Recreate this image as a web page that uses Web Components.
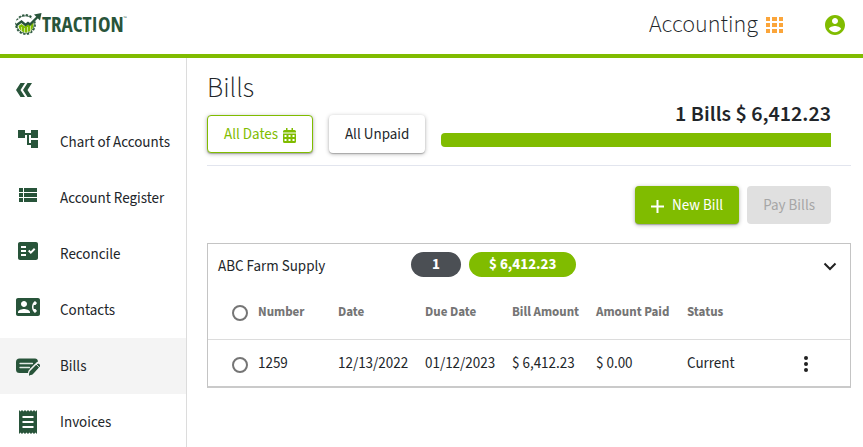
<!DOCTYPE html>
<html lang="en">
<head>
<meta charset="utf-8">
<title>Traction – Bills</title>
<style>
  html, body { height: 100%; }
  body {
    margin: 0;
    --brand: #80bc00;
    --forest: #28543a;
    --ink: #212529;
    --line: #dcdcdc;
    font: 15px/20px "Source Sans 3", "Noto Sans CJK SC", sans-serif;
    color: var(--ink);
    background: #fff;
  }
</style>
</head>
<body>
<app-shell>
  <app-header slot="header" section="Accounting"></app-header>
  <side-nav slot="nav">
    <nav-item icon="tree">Chart of Accounts</nav-item>
    <nav-item icon="list">Account Register</nav-item>
    <nav-item icon="check">Reconcile</nav-item>
    <nav-item icon="contact">Contacts</nav-item>
    <nav-item icon="bill" centered current>Bills</nav-item>
    <nav-item icon="receipt" centered>Invoices</nav-item>
  </side-nav>
  <bills-page>
    <vendor-card>
      <span slot="name">ABC Farm Supply</span>
      <pill-badge slot="badges" tone="dark">1</pill-badge>
      <pill-badge slot="badges">$ 6,412.23</pill-badge>
    </vendor-card>
  </bills-page>
</app-shell>
<script>
const icons = {
  tree: '<path d="M22 11V3h-7v3H9V3H2v8h7V8h2v10h4v3h7v-8h-7v3h-2V8h2v3z"/>',
  list: '<path d="M3 14h4v-4H3zm0 5h4v-4H3zM3 9h4V5H3zm5 5h13v-4H8zm0 5h13v-4H8zM8 5v4h13V5z"/>',
  check: '<path fill-rule="evenodd" d="M20 3H4c-1.100 0-2 .9-2 2v14c0 1.100.9 2 2 2h16c1.100 0 2-.9 2-2V5c0-1.100-.9-2-2-2zM10 17H5v-2h5zm0-4H5v-2h5zm0-4H5V7h5zm4.820 6L12 12.160l1.410-1.410 1.410 1.420L17.990 9l1.420 1.420z"/>',
  contact: '<path d="M22 3H2C.9 3 0 3.900 0 5v14c0 1.100.9 2 2 2h20c1.100 0 1.990-.9 1.990-2L24 5c0-1.100-.9-2-2-2zM8 6c1.660 0 3 1.340 3 3s-1.340 3-3 3-3-1.340-3-3 1.340-3 3-3zm6 12H2v-1c0-2 4-3.100 6-3.100s6 1.100 6 3.100zm3.850-4h1.640L21 16l-1.990 1.990c-1.310-.98-2.280-2.380-2.730-3.990-.18-.64-.28-1.310-.28-2s.1-1.360.28-2c.45-1.620 1.420-3.010 2.730-3.990L21 8l-1.510 2h-1.640c-.22.63-.35 1.300-.35 2s.13 1.370.35 2z"/>',
  bill: '<path d="M3.500 4.500h15.500q2.600 0 3 3l-1.200.8-6.800 6.700-1.200 4H3.500Q0 19 0 15.500V8q0-3.500 3.500-3.500z"/><path d="M4 9.500h12.500M4 13.500h9.500" stroke="#e4ebe6" stroke-width="1.300" stroke-linecap="round"/><path d="M20.200 11l2.600 2.600-6.200 6.700-3.600 1.200.8-3.900zM21 10.300q1.300-1 2.400.1t.1 2.500z" stroke="#f4f4f4" stroke-width="3" paint-order="stroke" stroke-linejoin="round"/><path d="M20.200 11l2.600 2.600-6.200 6.700-3.600 1.200.8-3.900zM21 10.300q1.300-1 2.400.1t.1 2.500z"/>',
  receipt: '<path fill-rule="evenodd" d="M17.500 18h-11v-2h11zm0-5h-11v-2h11zm0-5h-11V6h11zM3 24l1.500-1.500L6 24l1.500-1.500L9 24l1.500-1.500L12 24l1.500-1.500L15 24l1.500-1.500L18 24l1.500-1.500L21 24V0l-1.500 1.500L18 0l-1.500 1.500L15 0l-1.500 1.500L12 0l-1.500 1.500L9 0 7.500 1.500 6 0 4.500 1.500 3 0z"/>'
};

class ShadowElement extends HTMLElement {
  connectedCallback() {
    if (!this.shadowRoot) this.attachShadow({ mode: 'open' }).innerHTML = this.markup();
  }
}

customElements.define('app-shell', class extends ShadowElement {
  markup() { return `
    <style>
      :host { display: flex; flex-direction: column; height: 100%; overflow: hidden; }
      .body { display: flex; flex: 1; min-height: 0; }
      main { flex: 1; min-width: 0; }
      ::slotted([slot=nav]) { flex: none; }
    </style>
    <slot name="header"></slot>
    <div class="body"><slot name="nav"></slot><main><slot></slot></main></div>`; }
});

customElements.define('app-header', class extends ShadowElement {
  markup() { return `
    <style>
      :host { display: flex; align-items: center; height: 54px; padding: 0 16px; border-bottom: 4px solid var(--brand); }
      .logo { display: flex; align-items: center; color: var(--forest); text-decoration: none; margin-bottom: 6px; }
      .logo span { font: bold 21px/24px "Open Sans Condensed", "Roboto Condensed", sans-serif; }
      .logo sup { font-size: 5px; line-height: 5px; align-self: flex-start; margin-top: 4px; }
      .section { margin: 0 0 4px auto; font-size: 24px; font-weight: 300; line-height: 32px; }
      button { display: flex; border: 0; padding: 0; background: none; margin-bottom: 4px; cursor: pointer; }
      .apps { margin-left: 5px; }
      .user { margin-left: 38px; }
      svg { display: block; margin-left: -1px; }
    </style>
    <a class="logo" href="#" aria-label="Traction">
      <svg width="27" height="24" viewBox="0 0 27 24">
        <circle cx="10.500" cy="12.500" r="9.600" fill="none" stroke="#28543a" stroke-width="1.600" stroke-dasharray="2.300 1.470"/>
        <circle cx="10.500" cy="12.500" r="8.700" fill="none" stroke="#28543a" stroke-width=".9"/>
        <path d="M3.500 14l3-2 3.500 2.500 2.500-2.500 2 1 3.500-4q1.500 7-2.500 9.800-5 3.200-9.500 0-2-1.800-2.500-4.800z" fill="#80bc00"/>
        <path d="M6.500 15v5M9.500 16v5M12.500 15v6M15.500 13v7" stroke="#d9edb3" stroke-width=".8"/>
        <path d="M1 11.500l5.500-4 4 3.500 2.500-2 2 1.500L23 3" fill="none" stroke="#fff" stroke-width="4"/>
        <path d="M1 13.500l5.500-4 4 3.500 2.500-2 2 1.500L23 4.500" fill="none" stroke="#28543a" stroke-width="2.400"/>
        <path d="M19 2.500L26.500 1 25 8.500z" fill="#28543a"/>
      </svg><span>TRACTION</span><sup>™</sup>
    </a>
    <span class="section">${this.getAttribute('section')}</span>
    <button class="apps" aria-label="Apps"><svg width="24" height="24" fill="#fba53a"><path d="M4 4h4v4H4zm6 0h5v4h-5zm7 0h4v4h-4zM4 10h4v4H4zm6 0h5v4h-5zm7 0h4v4h-4zM4 16h4v4H4zm6 0h5v4h-5zm7 0h4v4h-4z"/></svg></button>
    <button class="user" aria-label="Account"><svg width="24" height="24" fill="#80bc00"><path fill-rule="evenodd" d="M12 2C6.480 2 2 6.480 2 12s4.480 10 10 10 10-4.480 10-10S17.520 2 12 2zm0 3c1.660 0 3 1.340 3 3s-1.340 3-3 3-3-1.340-3-3 1.340-3 3-3zm0 14.200c-2.500 0-4.710-1.280-6-3.220.03-1.990 4-3.080 6-3.080 1.990 0 5.970 1.090 6 3.080-1.290 1.940-3.500 3.220-6 3.220z"/></svg></button>`; }
});

customElements.define('side-nav', class extends ShadowElement {
  markup() { return `
    <style>
      :host { display: block; width: 186px; border-right: 1px solid var(--line); }
      button { display: flex; align-items: center; height: 56px; padding: 8px 16px 0; border: 0; background: none; box-sizing: border-box; cursor: pointer; }
    </style>
    <nav aria-label="Accounting">
      <button aria-label="Collapse menu"><svg width="16" height="14" fill="#28543a"><path d="M4.500 0H9L4.500 7 9 14H4.500L0 7zM11.500 0H16l-4.500 7 4.500 7h-4.500L7 7z"/></svg></button>
      <slot></slot>
    </nav>`; }
});

customElements.define('nav-item', class extends ShadowElement {
  markup() { return `
    <style>
      :host { display: block; }
      :host([current]) { background: #f4f4f4; }
      a { display: flex; align-items: center; gap: 20px; height: 56px; padding: 2px 0 0 16px; box-sizing: border-box; color: inherit; text-decoration: none; white-space: nowrap; }
      svg { flex: none; margin-bottom: 8px; }
      :host([centered]) svg { margin-bottom: 2px; }
    </style>
    <a href="#"><svg width="24" height="24" fill="#28543a" aria-hidden="true">${icons[this.getAttribute('icon')]}</svg><slot></slot></a>`; }
});

customElements.define('action-button', class extends ShadowElement {
  markup() { return `
    <style>
      :host { display: block; }
      button {
        display: flex; align-items: center; gap: 5px; height: 38px; padding: 2px 16px 0; box-sizing: border-box;
        font: inherit; color: var(--ink); background: #fff; border: 0; border-radius: 4px; white-space: nowrap;
        box-shadow: 0 1px 4px rgba(0,0,0,.3), 0 1px 1px rgba(0,0,0,.2); cursor: pointer;
      }
      :host([tone=outline]) button { color: var(--brand); border: 1px solid var(--brand); }
      :host([tone=solid]) button { color: #fff; background: var(--brand); gap: 8px; }
      button:disabled { color: #a6a6a6; background: #e0e0e0; box-shadow: none; }
    </style>
    <button ${this.hasAttribute('disabled') ? 'disabled' : ''}><slot></slot></button>`; }
});

customElements.define('pill-badge', class extends ShadowElement {
  markup() { return `
    <style>
      :host { display: block; min-width: 10px; padding: 1px 20px 0; border-radius: 13px; background: var(--brand); color: #fff; font-weight: 700; line-height: 24px; text-align: center; white-space: nowrap; }
      :host([tone=dark]) { background: #4b4f54; }
    </style><slot></slot>`; }
});

customElements.define('bills-page', class extends ShadowElement {
  markup() { return `
    <style>
      :host { display: block; padding: 18px 12px 0 20px; }
      h1 { margin: 0; font-size: 28px; font-weight: 300; line-height: 24px; }
      .filters { display: flex; align-items: flex-end; gap: 16px; padding: 0 20px 12px 0; border-bottom: 1px solid #e2e5ee; }
      .total { flex: 1; min-width: 0; text-align: right; font-size: 22px; font-weight: 600; line-height: 28px; padding-bottom: 6px; }
      .bar { height: 14px; margin-top: 5px; border-radius: 4px 0 0 4px; background: var(--brand); }
      .actions { display: flex; justify-content: flex-end; gap: 8px; padding: 20px 20px 19px 0; }
    </style>
    <h1>Bills</h1>
    <div class="filters">
      <action-button tone="outline">All Dates <svg width="13" height="15" viewBox="0 0 13 15" fill="#80bc00"><path fill-rule="evenodd" d="M3 0h1.500v2H8.500V0H10v2h1.500Q13 2 13 3.500V4.500H0V3.500Q0 2 1.500 2H3zM0 5.500h13v8Q13 15 11.500 15h-10Q0 15 0 13.500zM1.500 7v2h2V7zm4 0v2h2V7zm4 0v2h2V7zm-8 4v2h2v-2zm4 0v2h2v-2zm4 0v2h2v-2z"/></svg></action-button>
      <action-button>All Unpaid</action-button>
      <div class="total">1 Bills $ 6,412.23<div class="bar"></div></div>
    </div>
    <div class="actions">
      <action-button tone="solid"><svg width="13" height="13" fill="none" stroke="#fff" stroke-width="2"><path d="M6.500 0v13M0 6.500h13"/></svg>New Bill</action-button>
      <action-button disabled>Pay Bills</action-button>
    </div>
    <slot></slot>`; }
});

customElements.define('vendor-card', class extends ShadowElement {
  markup() { return `
    <style>
      :host { display: block; border: 1px solid #c4c4c4; border-bottom: 2px solid #cacaca; }
      header { display: grid; grid-template-columns: 193px 1fr auto; align-items: center; height: 42px; padding: 0 8px 0 10px; }
      ::slotted([slot=name]) { padding-top: 3px; }
      .badges { display: flex; gap: 8px; margin-bottom: 2px; }
      button { display: block; border: 0; padding: 0; background: none; cursor: pointer; }
      header button { margin-top: 2px; }
      svg { display: block; }
      table { width: 100%; table-layout: fixed; border-collapse: collapse; }
      th, td { padding: 0; text-align: left; white-space: nowrap; box-sizing: border-box; }
      th { height: 53px; color: #757575; font-size: 13px; font-weight: 700; border-bottom: 1px solid var(--line); }
      td { height: 47px; padding-top: 3px; }
      input { appearance: none; display: block; width: 16px; height: 16px; margin: 2px 0 0 24px; border: 2px solid #757575; border-radius: 50%; box-sizing: border-box; }
      td button { margin-left: auto; margin-right: 32px; }
    </style>
    <header>
      <slot name="name"></slot>
      <div class="badges"><slot name="badges"></slot></div>
      <button aria-label="Collapse vendor"><svg width="24" height="24" fill="none" stroke="#212121" stroke-width="2"><path d="M6.500 9.500L12 15l5.500-5.500"/></svg></button>
    </header>
    <table>
      <colgroup><col style="width:50px"><col style="width:80px"><col style="width:87px"><col style="width:87px"><col style="width:84px"><col style="width:91px"><col style="width:80px"><col></colgroup>
      <thead><tr><th><input type="checkbox" aria-label="Select all bills"></th><th>Number</th><th>Date</th><th>Due Date</th><th>Bill Amount</th><th>Amount Paid</th><th>Status</th><th></th></tr></thead>
      <tbody><tr><td><input type="checkbox" aria-label="Select bill 1259"></td><td>1259</td><td>12/13/2022</td><td>01/12/2023</td><td>$ 6,412.23</td><td>$ 0.00</td><td>Current</td><td><button aria-label="Bill actions"><svg width="24" height="24" fill="#212121"><circle cx="12" cy="6" r="2"/><circle cx="12" cy="12" r="2"/><circle cx="12" cy="18" r="2"/></svg></button></td></tr></tbody>
    </table>`; }
});
</script>
</body>
</html>
